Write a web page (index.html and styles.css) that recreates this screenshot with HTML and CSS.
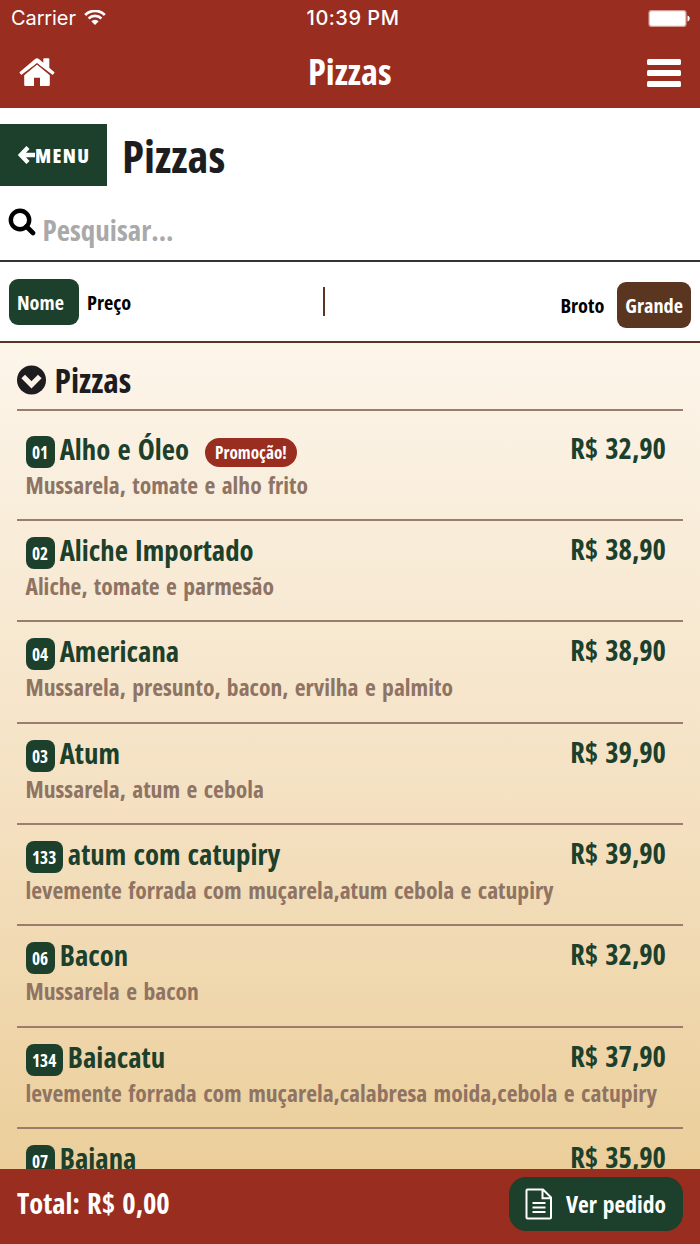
FILE: index.html
```html
<!DOCTYPE html>
<html lang="pt-BR">
<head>
    <meta charset="UTF-8">
    <meta name="viewport" content="width=device-width, initial-scale=1.0">
    <title>Pizzas</title>
    <link rel="stylesheet" href="styles.css">
</head>
<body>
    <header>
        <div class="status">
            <div class="carrier">
                <span>Carrier</span>
                <svg width="22" height="16" viewBox="0 0 22 16">
                    <path d="M1.2 4.900a14 14 0 0 1 19.600 0" fill="none" stroke="#fff" stroke-width="2.800"/>
                    <path d="M4.600 8.500a9.200 9.200 0 0 1 12.800 0" fill="none" stroke="#fff" stroke-width="2.600"/>
                    <path d="M11 15L7.300 11.300a5.300 5.300 0 0 1 7.400 0z" fill="#fff"/>
                </svg>
            </div>
            <span class="hora">10:39 PM</span>
            <svg class="bateria" width="42" height="17" viewBox="0 0 42 17">
                <rect x="1" y=".6" width="37" height="15.800" rx="2.400" fill="#fff" stroke="#d39b93" stroke-width="1.200"/>
                <path d="M39.500 5.600a3 3 0 0 1 0 5.800z" fill="#fff"/>
            </svg>
        </div>
        <div class="topo">
            <svg width="36" height="30" viewBox="0 0 36 30">
                <path d="M5.200 17.200L18 6.600l12.800 10.600v9.600a1.200 1.200 0 0 1-1.200 1.200H21v-8.300h-6V28H6.400a1.200 1.200 0 0 1-1.200-1.200z" fill="#fff"/>
                <path d="M.8 13.900L16.100 1.100a3 3 0 0 1 3.800 0l4.400 3.700V.9q0-.7.7-.7h4.600q.7 0 .7.700v8.800l4.900 4.200q.5.5.1 1l-1.200 1.500q-.5.5-1 .1L18 5.200 2.900 16.500q-.5.400-1-.1L.7 14.900q-.4-.5.1-1z" fill="#fff"/>
                <path d="M3.500 17.600L18 5.600l14.500 12" fill="none" stroke="#992d20" stroke-width="1"/>
            </svg>
            <h2>Pizzas</h2>
            <svg width="34" height="28" viewBox="0 0 34 28">
                <rect width="34" height="6" rx="1.500" fill="#fff"/>
                <rect y="11" width="34" height="6" rx="1.500" fill="#fff"/>
                <rect y="22" width="34" height="6" rx="1.500" fill="#fff"/>
            </svg>
        </div>
    </header>

    <main>
        <div class="titulo">
            <a class="voltar" href="#menu">
                <svg width="17" height="18" viewBox="0 0 17 18">
                    <path d="M10 1.500L2.800 9l7.200 7.500M3.500 9H17" fill="none" stroke="#fff" stroke-width="4.400"/>
                </svg>
                <span>MENU</span>
            </a>
            <h1>Pizzas</h1>
        </div>

        <div class="busca">
            <svg width="28" height="28" viewBox="0 0 28 28">
                <circle cx="12" cy="12" r="9.200" fill="none" stroke="#000" stroke-width="4.400"/>
                <path d="M18.500 18.500l6.500 6.500" stroke="#000" stroke-width="4.600" stroke-linecap="round"/>
            </svg>
            <span>Pesquisar...</span>
        </div>

        <div class="filtros">
            <div class="ordem">
                <span class="opcao verde">Nome</span>
                <span class="opcao">Preço</span>
            </div>
            <div class="divisor"></div>
            <div class="tamanho">
                <span class="opcao">Broto</span>
                <span class="opcao marrom">Grande</span>
            </div>
        </div>

        <!-- Lista de pizzas -->
        <section class="lista">
            <h3>
                <svg width="30" height="30" viewBox="0 0 30 30">
                    <circle cx="14.500" cy="15" r="14.500" fill="#1d1d1f"/>
                    <path d="M6.200 11.500l8.300 8.300 8.300-8.300" fill="none" stroke="#fbf3e6" stroke-width="5.200"/>
                </svg>
                <span>Pizzas</span>
            </h3>
            <div class="item primeiro">
                <div class="linha"><span class="numero">01</span><span class="nome">Alho e Óleo</span><span class="promo">Promoção!</span><span class="preco">R$ 32,90</span></div>
                <p>Mussarela, tomate e alho frito</p>
            </div>
            <div class="item">
                <div class="linha"><span class="numero">02</span><span class="nome">Aliche Importado</span><span class="preco">R$ 38,90</span></div>
                <p>Aliche, tomate e parmesão</p>
            </div>
            <div class="item">
                <div class="linha"><span class="numero">04</span><span class="nome">Americana</span><span class="preco">R$ 38,90</span></div>
                <p>Mussarela, presunto, bacon, ervilha e palmito</p>
            </div>
            <div class="item">
                <div class="linha"><span class="numero">03</span><span class="nome">Atum</span><span class="preco">R$ 39,90</span></div>
                <p>Mussarela, atum e cebola</p>
            </div>
            <div class="item">
                <div class="linha"><span class="numero">133</span><span class="nome">atum com catupiry</span><span class="preco">R$ 39,90</span></div>
                <p>levemente forrada com muçarela,atum cebola e catupiry</p>
            </div>
            <div class="item">
                <div class="linha"><span class="numero">06</span><span class="nome">Bacon</span><span class="preco">R$ 32,90</span></div>
                <p>Mussarela e bacon</p>
            </div>
            <div class="item">
                <div class="linha"><span class="numero">134</span><span class="nome">Baiacatu</span><span class="preco">R$ 37,90</span></div>
                <p>levemente forrada com muçarela,calabresa moida,cebola e catupiry</p>
            </div>
            <div class="item">
                <div class="linha"><span class="numero">07</span><span class="nome">Baiana</span><span class="preco">R$ 35,90</span></div>
            </div>
        </section>
    </main>

    <footer>
        <span class="total">Total: R$ 0,00</span>
        <a class="pedido" href="#pedido">
            <svg width="28" height="32" viewBox="0 0 28 32">
                <path d="M2.500 1.500h15.500l8 8v20q0 1-1 1h-22.500q-1 0-1-1v-27q0-1 1-1zM17.500 1.500v8.700H26" fill="none" stroke="#fff" stroke-width="2"/>
                <path d="M7.500 15h13M7.500 19.500h13M7.500 24h13" stroke="#fff" stroke-width="2"/>
            </svg>
            <span>Ver pedido</span>
        </a>
    </footer>
</body>
</html>
```
FILE: styles.css
```css
* {
    box-sizing: border-box;
}
body {
    margin: 0;
    height: 1244px;
    display: flex;
    flex-direction: column;
    overflow: hidden;
    font-family: "Open Sans", sans-serif;
    font-stretch: 75%;
    font-weight: 700;
    font-kerning: none;
    background: #fff;
    color: #1d1d1f;
}
h1, h2, h3, p {
    margin: 0;
    font-weight: 700;
}
svg {
    display: block;
    flex: none;
}
a {
    color: #fff;
    text-decoration: none;
}
span {
    white-space: nowrap;
}
header {
    flex: none;
    height: 108px;
    background: #992d20;
    color: #fff;
}
.status {
    height: 36px;
    padding: 0 10px 0 11px;
    display: grid;
    grid-template-columns: 1fr auto 1fr;
    align-items: center;
    font-family: Inter, sans-serif;
    font-stretch: 100%;
    font-size: 20px;
    font-weight: 400;
}
.carrier {
    display: flex;
    align-items: center;
    gap: 8px;
}
.hora {
    padding-left: 5px;
    font-weight: 500;
    letter-spacing: 0.5px;
}
.bateria {
    justify-self: end;
}
.topo {
    height: 72px;
    padding: 2px 18.5px 0 19px;
    display: flex;
    align-items: center;
    justify-content: space-between;
}
.topo h2 {
    font-size: 36.5px;
    line-height: 72px;
    padding: 0 3px 4px 0;
}
main {
    flex: 1;
    min-height: 0;
    display: flex;
    flex-direction: column;
}
.titulo {
    height: 78px;
    padding-top: 16px;
    display: flex;
    gap: 15px;
}
.voltar {
    width: 107px;
    height: 62px;
    padding-left: 18px;
    display: flex;
    align-items: center;
    background: #1c402b;
    font-size: 20px;
    font-weight: 800;
    letter-spacing: 1.4px;
}
.titulo h1 {
    font-size: 45px;
    line-height: 64px;
}
.busca {
    height: 76px;
    padding: 22px 8px 0;
    display: flex;
    gap: 6.5px;
    border-bottom: 2px solid #333;
    color: #a9a9a9;
    font-size: 29px;
    line-height: 43px;
}
.filtros {
    height: 81px;
    padding: 0 9px;
    display: grid;
    grid-template-columns: 314px 1fr auto;
    border-bottom: 2px solid #5a3621;
    color: #000;
    font-size: 20.3px;
}
.ordem, .tamanho {
    display: flex;
    padding-top: 17px;
}
.tamanho {
    padding-top: 20px;
    gap: 5px;
}
.divisor {
    width: 2px;
    height: 29px;
    margin-top: 25px;
    background: #5a3621;
}
.opcao {
    height: 46px;
    padding: 0 8px;
    border-radius: 9px;
    line-height: 47px;
}
.verde {
    width: 70px;
    background: #1c402b;
    color: #fff;
}
.marrom {
    background: #5a3621;
    color: #fff;
}
.lista {
    flex: 1;
    min-height: 0;
    overflow: hidden;
    padding: 0 17px;
    background: linear-gradient(#fcf5ea, #f4e0c0 58%, #ebce9a);
}
.lista h3 {
    height: 68px;
    padding-top: 7px;
    display: flex;
    align-items: center;
    gap: 7.5px;
    border-bottom: 2px solid #9b7d6d;
    font-size: 33.5px;
    line-height: 44px;
}
.item {
    height: 101.35px;
    padding: 7px 17px 0 8.5px;
    border-bottom: 2px solid #9b7d6d;
}
.primeiro {
    height: 110px;
    padding-top: 15.5px;
}
.linha {
    height: 42px;
    display: flex;
    align-items: flex-start;
    color: #1c402b;
    font-size: 28.8px;
    line-height: 43px;
    word-spacing: 2px;
}
.numero {
    margin: 9px 5px 0 0;
    padding: 0 6.5px;
    height: 32px;
    border-radius: 8px;
    background: #1c402b;
    color: #fff;
    font-size: 17.3px;
    line-height: 33px;
}
.promo {
    margin: 11px 0 0 16px;
    padding: 0 10px;
    height: 29px;
    border-radius: 15px;
    background: #992d20;
    color: #fff;
    font-size: 17.2px;
    line-height: 29px;
}
.preco {
    margin-left: auto;
    font-size: 28.5px;
}
.item p {
    color: #8f7363;
    font-size: 23.6px;
    line-height: 33px;
    word-spacing: 2.2px;
}
footer {
    flex: none;
    height: 75px;
    padding: 0 17px;
    display: flex;
    justify-content: space-between;
    background: #992d20;
    color: #fff;
}
.total {
    font-size: 28.6px;
    line-height: 68px;
    word-spacing: 2px;
}
.pedido {
    width: 174px;
    height: 54px;
    margin-top: 8px;
    padding-left: 16px;
    display: flex;
    align-items: center;
    gap: 13px;
    border-radius: 17px;
    background: #1c402b;
    font-size: 23.5px;
    word-spacing: 1.5px;
}
```
